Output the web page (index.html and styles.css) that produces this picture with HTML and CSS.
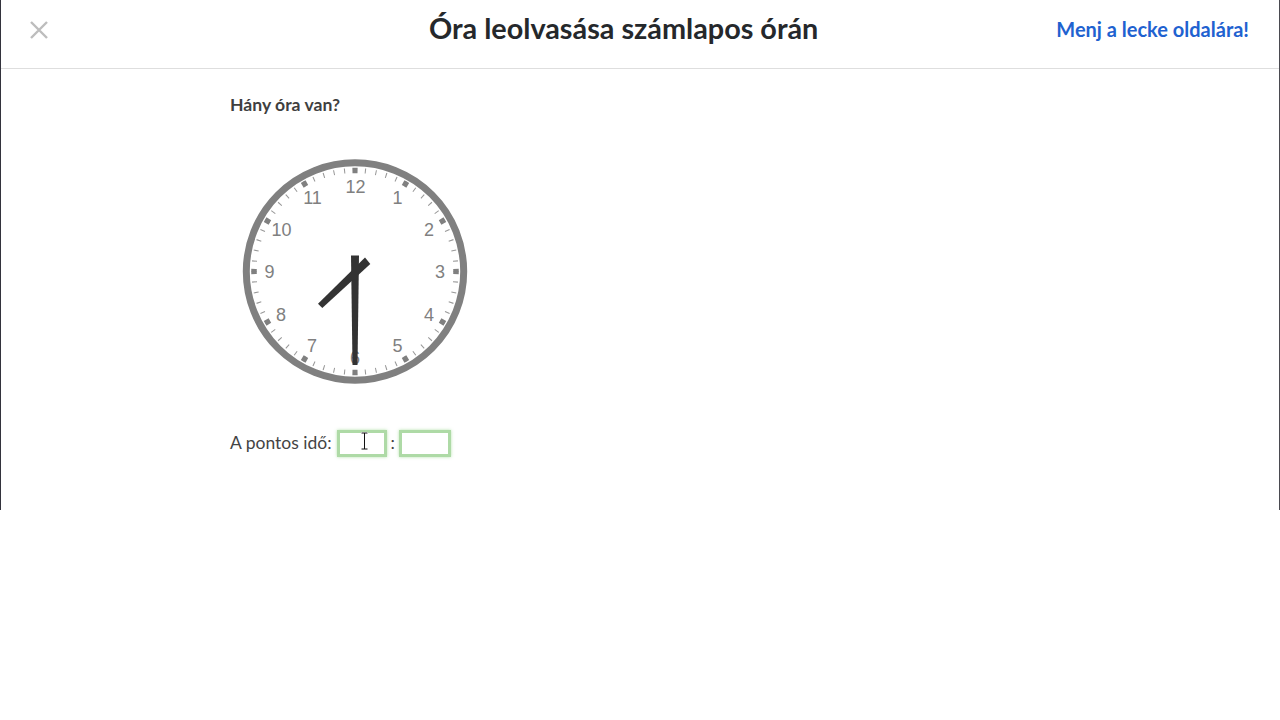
FILE: index.html
```html
<!DOCTYPE html>
<html lang="hu">
<head>
<meta charset="utf-8">
<title>Óra leolvasása számlapos órán</title>
<link rel="stylesheet" href="styles.css">
</head>
<body>
<main class="frame">
  <header class="topbar">
    <button class="close" aria-label="Bezárás">
      <svg class="close-icon" viewBox="0 0 20 20" width="20" height="20"><path d="M2 2 L18 18 M18 2 L2 18"/></svg>
    </button>
    <h1 class="title">Óra leolvasása számlapos órán</h1>
    <a class="lesson-link" href="#">Menj a lecke oldalára!</a>
  </header>
  <section class="content">
    <p class="question">Hány óra van?</p>
    <svg class="clock" viewBox="230 150 250 240" width="250" height="240">
      <circle class="rim" cx="355" cy="271.5" r="108.7"/>
      <circle class="minor" cx="355" cy="271.5" r="101" pathLength="60"/>
      <circle class="major" cx="355" cy="271.5" r="101" pathLength="12"/>
      <g class="nums">
        <text x="355.5" y="193.3">12</text>
        <text x="397.5" y="204.3">1</text>
        <text x="429" y="236.3">2</text>
        <text x="440" y="278.3">3</text>
        <text x="429" y="321.3">4</text>
        <text x="397.5" y="352.3">5</text>
        <text x="355" y="364.3">6</text>
        <text x="312" y="352.3">7</text>
        <text x="281" y="321.3">8</text>
        <text x="269.5" y="278.3">9</text>
        <text x="281.5" y="236.3">10</text>
        <text x="312.5" y="204.3">11</text>
      </g>
      <polygon class="hand" points="351,255.5 359,255.5 357.5,365 352.5,365"/>
      <polygon class="hand" points="365,257.5 370.3,264 322.3,308 318,303.7"/>
    </svg>
    <div class="answer">
      <span class="label">A pontos idő:</span>
      <span class="field">
        <input class="box box-hour" type="text" aria-label="óra">
        <svg class="ibeam" viewBox="0 0 9 18" width="9" height="18"><path class="ibeam-halo" d="M1 1 H8 M4.5 1 V17 M1 17 H8"/><path class="ibeam-line" d="M1.5 1 H7.5 M4.5 1 V17 M1.5 17 H7.5"/></svg>
      </span>
      <span class="sep">:</span>
      <input class="box box-min" type="text" aria-label="perc">
    </div>
  </section>
</main>
</body>
</html>
```
FILE: styles.css
```css
* { box-sizing: border-box; }
html, body { margin: 0; padding: 0; background: #fff; }
body { font-family: Lato, "Liberation Sans", sans-serif; color: #444; }

.frame {
  height: 510px;
  background: #fff;
  border-left: 1px solid #33333d;
  border-right: 1px solid #4a4a50;
}

.topbar {
  display: flex;
  align-items: center;
  height: 69px;
  padding: 0 30px 10px 28px;
  border-bottom: 1px solid #dedede;
}
.close {
  display: flex;
  width: 20px;
  height: 20px;
  margin-top: 2px;
  padding: 0;
  border: 0;
  background: none;
}
.close-icon path { fill: none; stroke: #bdbdbd; stroke-width: 2.4; }
.title {
  flex: 1;
  margin: 0 0 2px;
  padding-left: 142px;
  text-align: center;
  font-size: 28.8px;
  font-weight: 700;
  line-height: 36px;
  color: #25282b;
}
.lesson-link {
  font-size: 20px;
  font-weight: 700;
  line-height: 28px;
  color: #1f62d0;
  text-decoration: none;
}

.content { padding: 24px 0 0 229px; }
.question {
  margin: 0;
  font-size: 17.6px;
  font-weight: 700;
  line-height: 24px;
  color: #3f3f3f;
}
.clock { display: block; margin-top: 33px; }
.rim { fill: #fff; stroke: #808080; stroke-width: 7; }
.minor { fill: none; stroke: #999; stroke-width: 5; stroke-dasharray: .1 .9; stroke-dashoffset: .05; }
.major { fill: none; stroke: #808080; stroke-width: 5.5; stroke-dasharray: .1 .9; stroke-dashoffset: .05; }
.nums text {
  font-family: "Liberation Sans", Arial, sans-serif;
  font-size: 18px;
  fill: #808080;
  text-anchor: middle;
}
.hand { fill: #333; }

.answer {
  display: flex;
  align-items: center;
  height: 27px;
  margin-top: 40px;
  font-size: 17.5px;
}
.label { margin-right: 5px; margin-top: -2px; }
.field { position: relative; display: flex; }
.sep { width: 12px; margin-top: -2px; text-align: center; }
.box {
  display: block;
  height: 27px;
  padding: 0;
  background: #fff;
  border: 3px solid #aedaa6;
  box-shadow: 0 0 3px rgba(150, 215, 140, .7);
  border-radius: 0;
}
.box-hour { width: 50px; }
.box-min { width: 52px; }
.ibeam { position: absolute; left: 23px; top: 2px; }
.ibeam path { fill: none; }
.ibeam-halo { stroke: #fff; stroke-width: 2.5; }
.ibeam-line { stroke: #111; stroke-width: 1; }
```
